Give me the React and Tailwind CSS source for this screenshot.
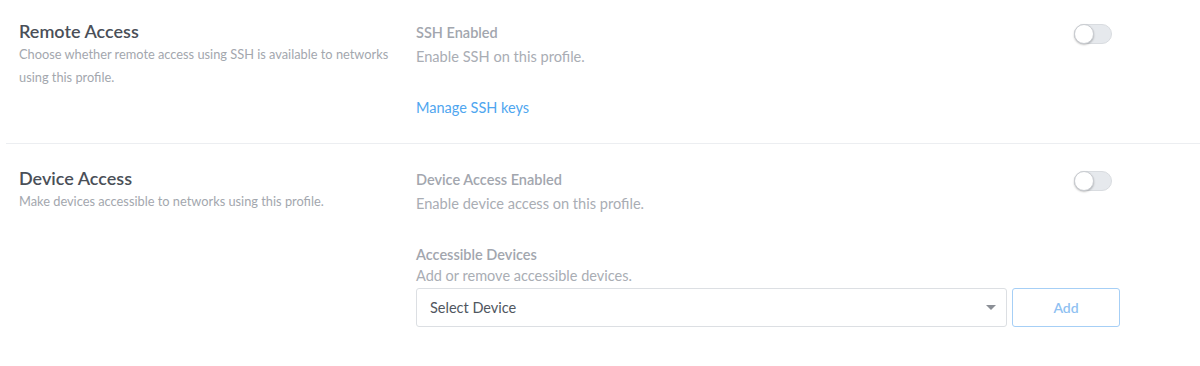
export default function App() {
  return (
    <div className="w-[1200px] h-[366px] bg-white font-['Lato',sans-serif] overflow-hidden">
      <Section
        title="Remote Access"
        desc="Choose whether remote access using SSH is available to networks using this profile."
        className="pt-[19px] pb-[25px] border-b border-[#eceef1]"
      >
        <ToggleRow label="SSH Enabled" help="Enable SSH on this profile." />
        <a className="block mt-[28px] text-[14.5px] leading-[20px] text-[#4fa6ef]">Manage SSH keys</a>
      </Section>
      <Section
        title="Device Access"
        desc="Make devices accessible to networks using this profile."
        className="pt-[22px]"
      >
        <ToggleRow label="Device Access Enabled" help="Enable device access on this profile." />
        <div className="mt-[28px]">
          <p className="text-[14.5px] leading-[20px] font-semibold text-[#a2a6ae]">Accessible Devices</p>
          <p className="text-[14.5px] leading-[22px] text-[#a9adb4]">Add or remove accessible devices.</p>
          <div className="flex gap-[5px] mt-[1px]">
            <div className="flex-1 h-[39px] rounded-[3px] border border-[#dcdfe3] flex items-center justify-between pl-[13px] pr-[10px]">
              <span className="text-[14.5px] text-[#505660]">Select Device</span>
              <span className="w-0 h-0 border-x-[5px] border-x-transparent border-t-[5px] border-t-[#8b8f96]" />
            </div>
            <button className="w-[108px] h-[39px] rounded-[3px] border border-[#a6cff6] text-[14px] font-semibold text-[#8fc1f2]">
              Add
            </button>
          </div>
        </div>
      </Section>
    </div>
  );
}

function Section({ title, desc, children, className = "" }) {
  return (
    <div className={`flex ml-[6px] ${className}`}>
      <div className="w-[410px] shrink-0 pl-[13px] pr-[20px]">
        <h2 className="text-[18px] leading-[24px] font-semibold text-[#4a4f58]">{title}</h2>
        <p className="text-[12.8px] leading-[23px] text-[#a3a7ae]">{desc}</p>
      </div>
      <div className="w-[704px] shrink-0">{children}</div>
    </div>
  );
}

function ToggleRow({ label, help }) {
  return (
    <div className="flex justify-between items-start pr-[8px]">
      <div className="pt-[4px]">
        <p className="text-[14.5px] leading-[20px] font-semibold text-[#a2a6ae]">{label}</p>
        <p className="pt-[1px] text-[14.6px] leading-[26px] text-[#a9adb4]">{help}</p>
      </div>
      <Toggle />
    </div>
  );
}

function Toggle() {
  return (
    <div className="mt-[5px] w-[38px] h-[20px] rounded-full bg-[#e6e9ed] border border-[#d9dce0] relative">
      <span className="absolute -left-[1px] -top-[1px] w-[20px] h-[20px] rounded-full bg-white border border-[#c9ccd1] shadow-[0_1px_2px_rgba(0,0,0,0.25)]" />
    </div>
  );
}
